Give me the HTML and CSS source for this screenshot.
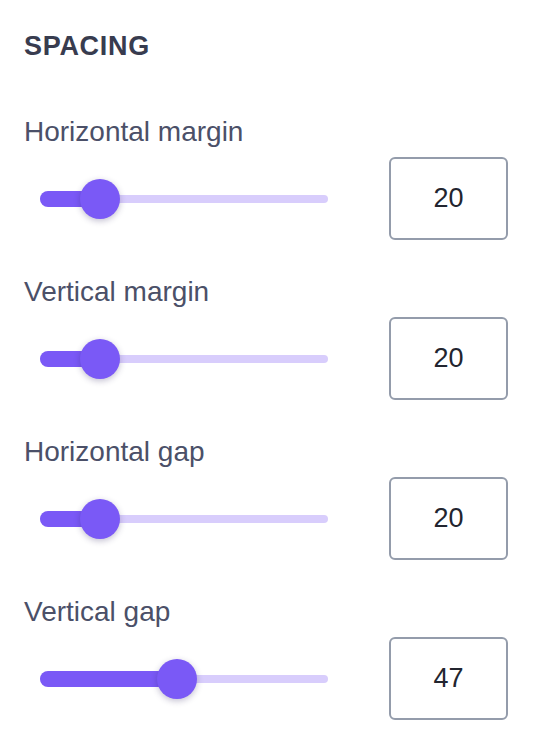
FILE: index.html
```html
<!DOCTYPE html>
<html>
<head>
<meta charset="utf-8">
<link rel="stylesheet" href="styles.css">
</head>
<body>
<section class="panel">
  <h2 class="title">SPACING</h2>
  <div class="groups">
    <div class="group">
      <div class="label">Horizontal margin</div>
      <div class="row">
        <div class="slider-wrap">
          <div class="slider" style="--pos: 20.8%">
            <div class="track"></div>
            <div class="fill"></div>
            <div class="thumb"></div>
          </div>
        </div>
        <input class="num" type="text" value="20">
      </div>
    </div>
    <div class="group">
      <div class="label">Vertical margin</div>
      <div class="row">
        <div class="slider-wrap">
          <div class="slider" style="--pos: 20.8%">
            <div class="track"></div>
            <div class="fill"></div>
            <div class="thumb"></div>
          </div>
        </div>
        <input class="num" type="text" value="20">
      </div>
    </div>
    <div class="group">
      <div class="label">Horizontal gap</div>
      <div class="row">
        <div class="slider-wrap">
          <div class="slider" style="--pos: 20.8%">
            <div class="track"></div>
            <div class="fill"></div>
            <div class="thumb"></div>
          </div>
        </div>
        <input class="num" type="text" value="20">
      </div>
    </div>
    <div class="group">
      <div class="label">Vertical gap</div>
      <div class="row">
        <div class="slider-wrap">
          <div class="slider" style="--pos: 47.4%">
            <div class="track"></div>
            <div class="fill"></div>
            <div class="thumb"></div>
          </div>
        </div>
        <input class="num" type="text" value="47">
      </div>
    </div>
  </div>
</section>
</body>
</html>
```
FILE: styles.css
```css
html, body {
  margin: 0;
  padding: 0;
  background: #ffffff;
}

body {
  font-family: "Liberation Sans", Arial, sans-serif;
}

.panel {
  padding: 30px 34px 0 24px;
}

.title {
  margin: 0;
  font-size: 27px;
  line-height: 32px;
  font-weight: 700;
  letter-spacing: 0.7px;
  color: #383c4f;
}

.groups {
  margin-top: 54px;
  display: flex;
  flex-direction: column;
  gap: 36px;
}

.group {
  display: flex;
  flex-direction: column;
  gap: 9px;
}

.label {
  font-size: 28px;
  line-height: 32px;
  color: #4b5068;
}

.row {
  display: flex;
  align-items: center;
}

.slider-wrap {
  flex: 0 0 320px;
  box-sizing: border-box;
  padding: 0 16px;
}

.slider {
  position: relative;
  height: 40px;
}

.track {
  position: absolute;
  left: 0;
  right: 0;
  top: 16px;
  height: 8px;
  border-radius: 4px;
  background: #d8cdfc;
}

.fill {
  position: absolute;
  left: 0;
  top: 12px;
  height: 16px;
  width: var(--pos);
  border-radius: 8px;
  background: #7a59f6;
}

.thumb {
  position: absolute;
  top: 0;
  left: calc(var(--pos) - 20px);
  width: 40px;
  height: 40px;
  border-radius: 50%;
  background: #7a59f6;
  box-shadow: 0 2px 6px rgba(40, 30, 90, 0.28);
}

.num {
  margin-left: 45px;
  width: 119px;
  height: 83px;
  box-sizing: border-box;
  border: 2px solid #949cab;
  border-radius: 6px;
  background: #ffffff;
  padding: 0;
  text-align: center;
  font-family: "Liberation Sans", Arial, sans-serif;
  font-size: 27px;
  color: #22252f;
  outline: none;
}
```
